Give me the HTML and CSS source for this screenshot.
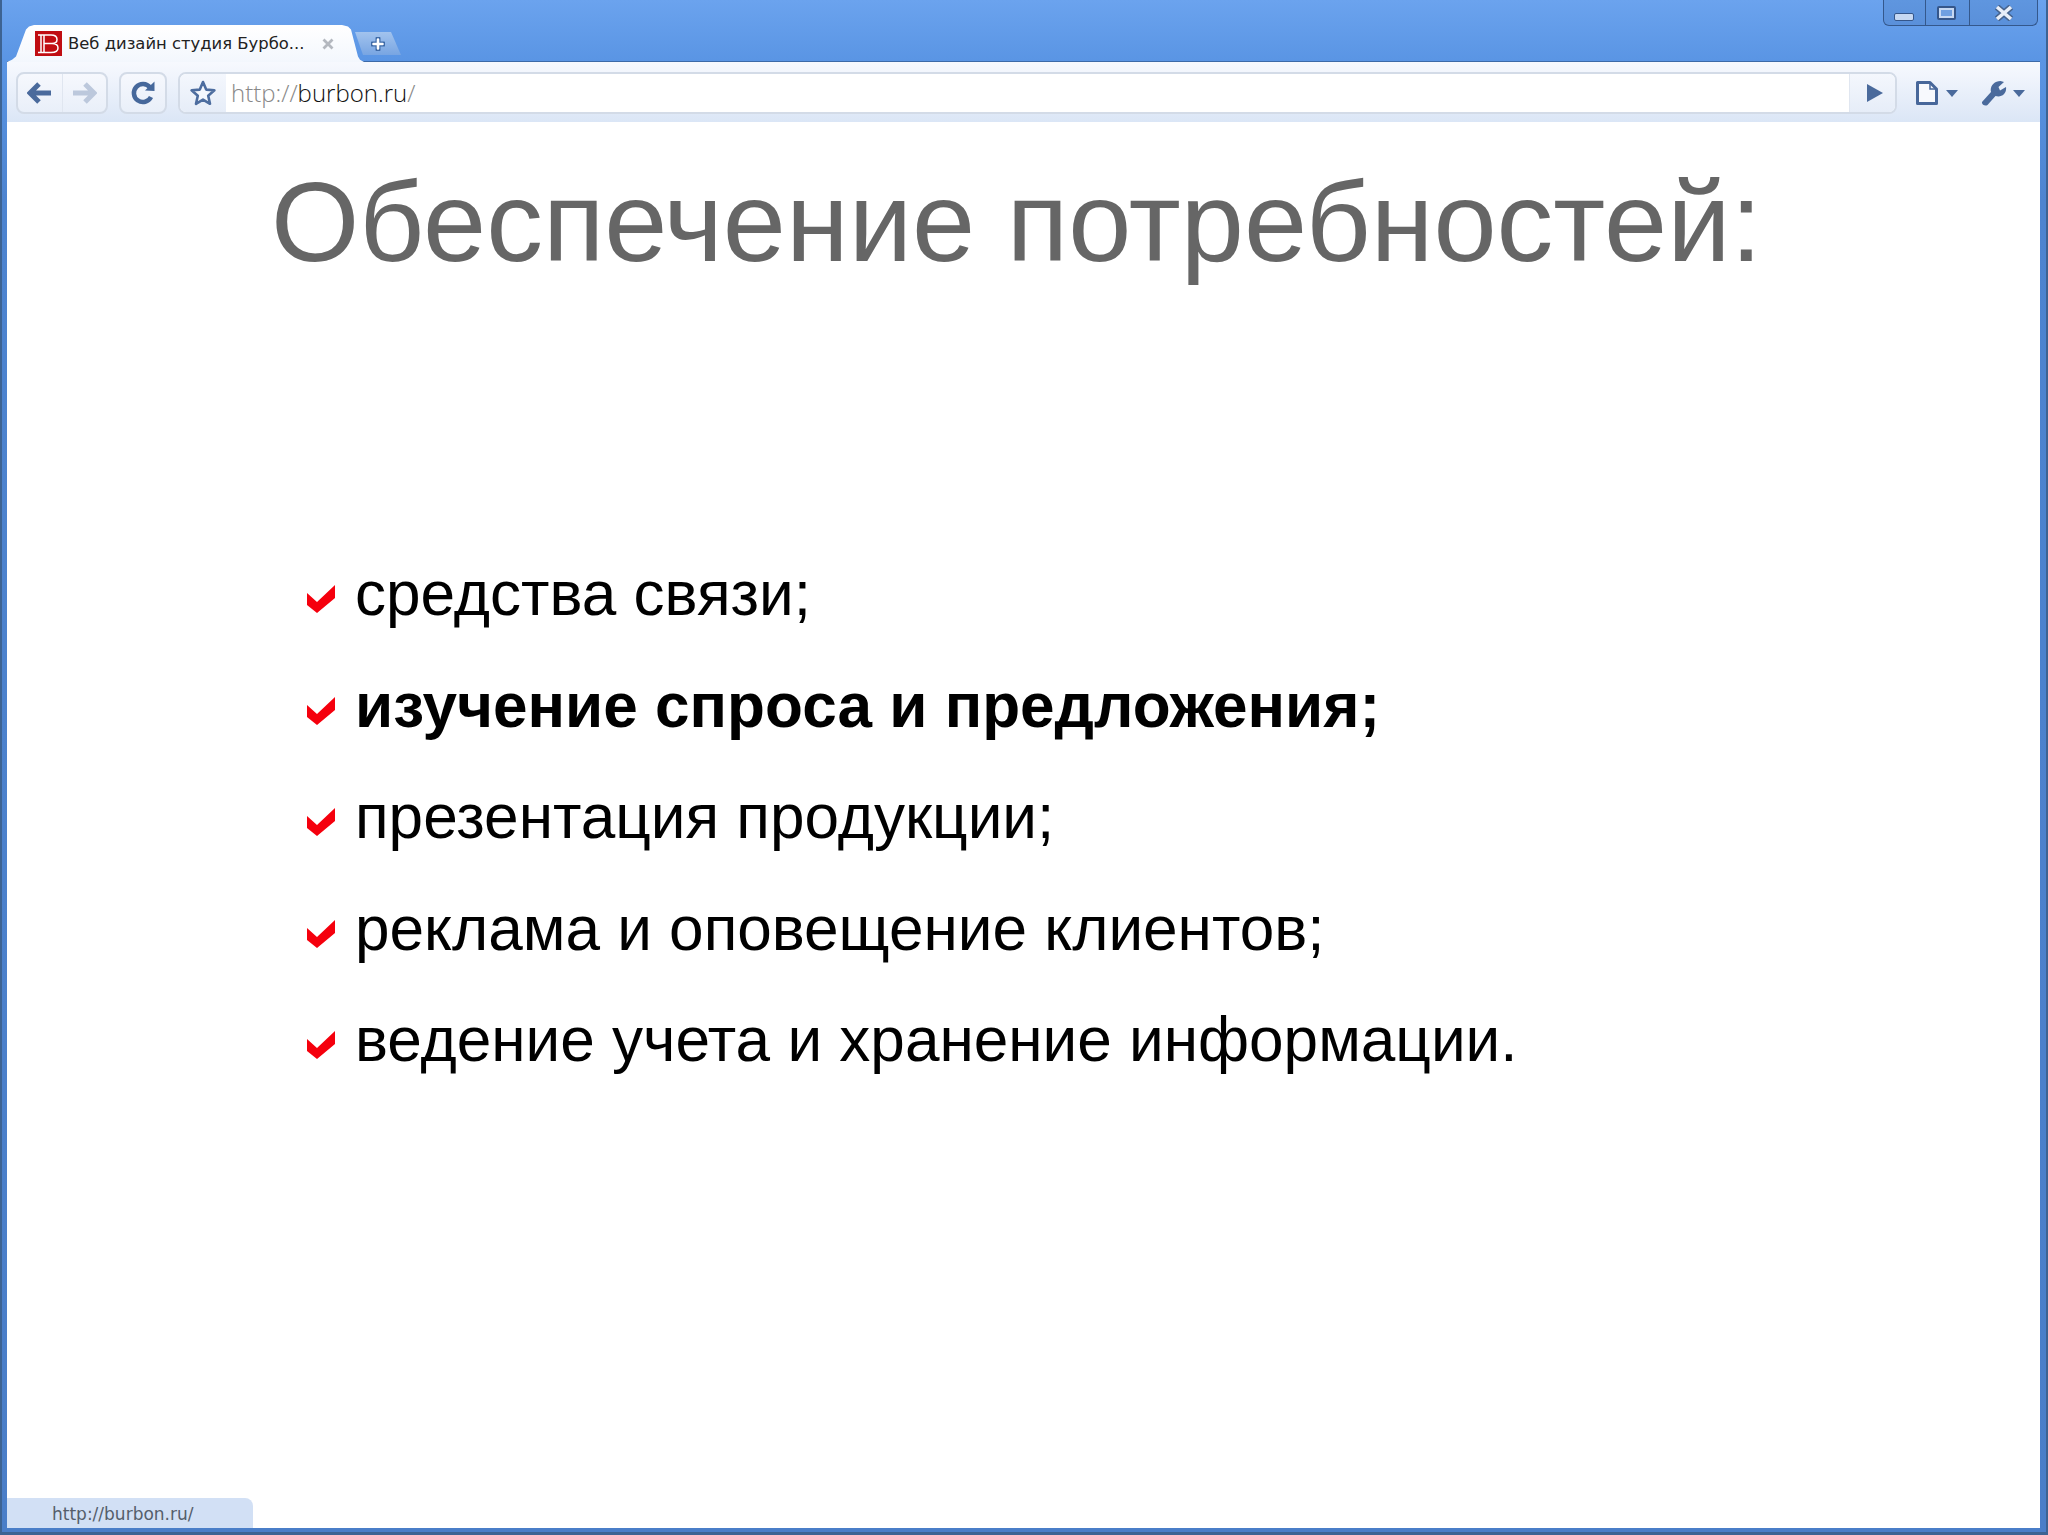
FILE: index.html
```html
<!DOCTYPE html>
<html lang="ru">
<head>
<meta charset="utf-8">
<title>Веб дизайн студия Бурбон</title>
<link rel="stylesheet" href="styles.css">
</head>
<body>
<div class="window">
  <div class="caption">
    <div class="tabstrip">
      <div class="tab">
        <svg class="favicon" viewBox="0 0 27 25" width="27" height="25"><rect width="27" height="25" fill="#c00d12"/><path d="M3 4H16Q22 4 22 8.500Q22 12.500 17 12.500Q23 12.500 23 17Q23 21.500 16 21.500H3M6 4V21.500M9 4V21.500M9 12.500H17" fill="none" stroke="#fff" stroke-width="1.500"/></svg>
        <span class="tab-title">Веб дизайн студия Бурбо...</span>
        <svg class="tab-close" viewBox="0 0 12 12" width="12" height="12"><path d="M1.500 1.500L10.500 10.500M10.500 1.500L1.500 10.500" stroke="#b4b8bf" stroke-width="2.800"/></svg>
      </div>
      <div class="newtab">
        <svg viewBox="0 0 14 14" width="14" height="14"><path d="M7 1.500V12.500M1.500 7H12.500" stroke="#3f6ba8" stroke-width="5" stroke-linecap="round"/><path d="M7 2.500V11.500M2.500 7H11.500" stroke="#fff" stroke-width="2.600" stroke-linecap="round"/></svg>
      </div>
    </div>
    <div class="winctrls">
      <div class="ctl ctl-min"><span class="min-glyph"></span></div>
      <div class="ctl ctl-max"><span class="max-glyph"></span></div>
      <div class="ctl ctl-close">
        <svg viewBox="0 0 20 16" width="20" height="16"><path d="M3 2L17 14M17 2L3 14" stroke="#46648f" stroke-width="6.500"/><path d="M3 2L17 14M17 2L3 14" stroke="#e8eef8" stroke-width="3.600"/></svg>
      </div>
    </div>
  </div>
  <div class="toolbar">
    <div class="btn-group nav">
      <div class="btn-cell">
        <svg viewBox="0 0 26 22" width="26" height="22"><path d="M12 2L3 11L12 20M4 11H24" fill="none" stroke="#4a6a9c" stroke-width="5"/></svg>
      </div>
      <div class="btn-cell btn-sep">
        <svg viewBox="0 0 26 22" width="26" height="22"><path d="M14 2L23 11L14 20M22 11H2" fill="none" stroke="#bcc8dc" stroke-width="5"/></svg>
      </div>
    </div>
    <div class="btn-group reload">
      <svg viewBox="0 0 26 26" width="26" height="26"><path d="M20 7.500A9 9 0 1 0 21 17" fill="none" stroke="#46689b" stroke-width="4.500"/><path d="M15 10.500L24.500 11V1.500Z" fill="#46689b"/></svg>
    </div>
    <div class="omnibox">
      <div class="star">
        <svg viewBox="0 0 28 28" width="28" height="28"><path d="M14 3L17.200 10.600L25.400 11.300L19.200 16.700L21 24.800L14 20.600L7 24.800L8.800 16.700L2.600 11.300L10.800 10.600Z" fill="#f4f7fd" stroke="#4d6d9f" stroke-width="2.600" stroke-linejoin="round"/></svg>
      </div>
      <div class="url"><span class="url-dim">http://</span>burbon.ru<span class="url-dim">/</span></div>
      <div class="go">
        <svg viewBox="0 0 16 18" width="16" height="18"><path d="M0 0L16 9L0 18Z" fill="#4a6a9c"/></svg>
      </div>
    </div>
    <div class="tool tool-page">
      <svg viewBox="0 0 22 24" width="22" height="24"><path d="M1.500 1.500H14L20.500 8V22.500H1.500Z" fill="#f7f9fd" stroke="#47679a" stroke-width="3" stroke-linejoin="round"/><path d="M14 1.500V8H20.500" fill="none" stroke="#47679a" stroke-width="1.500"/></svg>
      <span class="caret"></span>
    </div>
    <div class="tool tool-wrench">
      <svg viewBox="0 0 26 26" width="26" height="26"><path d="M1 22L10 12C8.500 6.500 13 1 19.500 1L23 2L17.500 7L19 10.500L25 7C26 13.500 20.500 18 14.500 16L6.500 25C4 26.500 0.500 24.500 1 22Z" fill="#4a6a9c"/></svg>
      <span class="caret"></span>
    </div>
  </div>
  <main class="page">
    <h1 class="title">Обеспечение потребностей:</h1>
    <ul class="needs">
      <li class="need"><svg class="check" viewBox="0 0 28 28" width="28" height="28"><path d="M0 8L10 17L28 0V13L10 28L0 20Z" fill="#f5000d"/></svg>средства связи;</li>
      <li class="need need-strong"><svg class="check" viewBox="0 0 28 28" width="28" height="28"><path d="M0 8L10 17L28 0V13L10 28L0 20Z" fill="#f5000d"/></svg>изучение спроса и предложения;</li>
      <li class="need"><svg class="check" viewBox="0 0 28 28" width="28" height="28"><path d="M0 8L10 17L28 0V13L10 28L0 20Z" fill="#f5000d"/></svg>презентация продукции;</li>
      <li class="need"><svg class="check" viewBox="0 0 28 28" width="28" height="28"><path d="M0 8L10 17L28 0V13L10 28L0 20Z" fill="#f5000d"/></svg>реклама и оповещение клиентов;</li>
      <li class="need"><svg class="check" viewBox="0 0 28 28" width="28" height="28"><path d="M0 8L10 17L28 0V13L10 28L0 20Z" fill="#f5000d"/></svg>ведение учета и хранение информации.</li>
    </ul>
    <div class="status">http://burbon.ru/</div>
  </main>
</div>
</body>
</html>
```
FILE: styles.css
```css
* { box-sizing: border-box; }
html, body { margin: 0; padding: 0; height: 100%; overflow: hidden; background: #fff; }
.window {
  width: 2048px; height: 1535px;
  display: flex; flex-direction: column;
  padding: 0 8px 7px 7px;
  background: linear-gradient(#6ba3ee 0, #5a95e4 60px, #4d84d0 200px, #4a7ec8 100%);
  box-shadow: inset 2px 0 0 #3d6392, inset -2px 0 0 #3d6392, inset 0 -3px 0 #3d6392;
  font-family: "DejaVu Sans", sans-serif;
}
.caption { height: 62px; display: flex; justify-content: space-between; align-items: flex-start; flex: none; box-shadow: inset 0 -1px 0 #3d6aa8; }
.tabstrip { display: flex; align-items: flex-end; height: 62px; }
.tab {
  width: 357px; height: 37px;
  display: flex; align-items: center;
  padding: 0 0 0 28px;
  background: linear-gradient(#fff, #f3f7fd);
  clip-path: polygon(0 100%, 5px 94%, 9px 85%, 19px 12%, 22px 4%, 27px 0, 335px 0, 341px 4%, 344px 12%, 351px 85%, 353px 94%, 357px 100%);
}
.favicon { flex: none; }
.tab-title { font-size: 16.4px; color: #222; margin-left: 6px; white-space: nowrap; }
.tab-close { margin-left: 18px; flex: none; }
.newtab {
  width: 46px; height: 23px; margin: 0 0 7px -9px;
  display: flex; align-items: center; justify-content: center;
  background: linear-gradient(#a2c3ee, #78a5e2);
  clip-path: polygon(0 0, 36px 0, 46px 100%, 8px 100%);
}
.winctrls {
  display: flex; width: 155px; height: 26px; margin-right: 2px;
  background: linear-gradient(#5f96df, #5a90da);
  border: 1px solid #34588c; border-top: 0;
  border-radius: 0 0 6px 6px;
}
.ctl { display: flex; align-items: center; justify-content: center; height: 100%; }
.ctl + .ctl { border-left: 1px solid #34588c; }
.ctl-min { width: 41px; padding: 8px 2px 0 0; }
.ctl-max { width: 44px; padding-right: 2px; }
.ctl-close { flex: 1; }
.min-glyph { width: 20px; height: 8px; background: #c6d8f2; border: 1px solid #35568a; border-radius: 2px; }
.max-glyph { width: 19px; height: 14px; background: #6f9fe0; border: 2px solid #35568a; box-shadow: inset 0 0 0 2px #c6d8f2; border-radius: 2px; }

.toolbar {
  height: 60px; flex: none;
  display: flex; align-items: flex-start;
  padding: 10px 0 0 9px;
  background: linear-gradient(#f7f9fe, #dbe6f6);
}
.btn-group {
  height: 42px; display: flex;
  border: 2px solid #d3dbe7; border-radius: 8px;
  background: linear-gradient(#f6f8fd, #e9eff9);
}
.nav { width: 92px; }
.btn-cell { flex: 1; display: flex; align-items: center; justify-content: center; }
.btn-sep { border-left: 1px solid #e0e6f0; }
.reload { width: 48px; margin-left: 11px; align-items: center; justify-content: center; }
.omnibox {
  width: 1719px; height: 42px; margin-left: 11px;
  display: flex; align-items: stretch;
  border: 2px solid #d3dbe7; border-radius: 8px;
  background: #fff; overflow: hidden;
}
.star { width: 46px; flex: none; display: flex; align-items: center; justify-content: center; background: linear-gradient(#f4f7fd, #e6edf8); }
.url { flex: 1; padding-left: 5px; font: 300 24px/38px "Open Sans", sans-serif; color: #111; white-space: nowrap; }
.url-dim { color: #888; }
.go { width: 46px; flex: none; display: flex; align-items: center; justify-content: center; padding-left: 4px; background: linear-gradient(#f4f7fd, #e6edf8); border-left: 1px solid #e0e6f0; }
.tool { display: flex; align-items: center; height: 42px; flex: none; }
.tool-page { margin-left: 19px; }
.tool-wrench { margin-left: 23px; }
.tool-page .caret { margin-left: 8px; }
.tool-wrench .caret { margin-left: 6px; }
.caret { width: 0; height: 0; border: 6px solid transparent; border-top: 7px solid #4a6a9c; border-bottom: 0; }

.page { flex: 1; position: relative; background: #fff; min-height: 0; padding: 35px 0 0 0; font-family: "Liberation Sans", sans-serif; }
.title { margin: 0 0 0 264px; font-size: 113.5px; line-height: 130px; font-weight: 400; color: #666; white-space: nowrap; }
.needs { list-style: none; margin: 251px 0 0 0; padding: 0 0 0 300px; }
.need { display: flex; align-items: center; height: 111.5px; font-size: 62.1px; color: #000; white-space: nowrap; }
.need-strong { font-weight: 700; }
.check { flex: none; margin: 11px 20px 0 0; }
.status {
  position: absolute; left: 0; bottom: 0;
  width: 246px; height: 30px; padding-left: 45px;
  background: #d2e0f5; border-top-right-radius: 8px;
  font: 17px/32px "DejaVu Sans", sans-serif; color: #555e6b;
}
```
